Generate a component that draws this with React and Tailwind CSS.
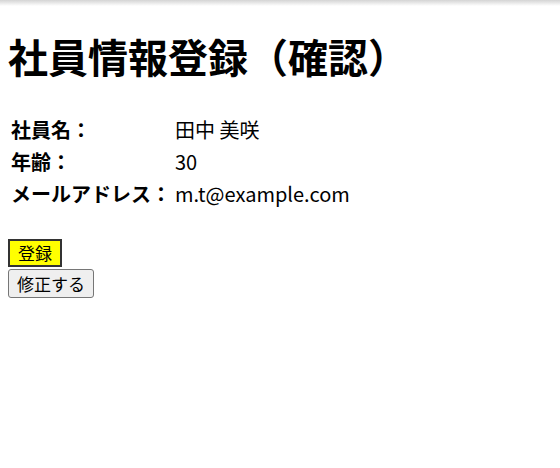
import React from 'react';

const rows = [
  { label: '社員名：', value: '田中 美咲' },
  { label: '年齢：', value: '30' },
  { label: 'メールアドレス：', value: 'm.t@example.com' },
];

const App = () => {
  return (
    <div className="relative min-h-[468px] bg-white text-black px-2 pt-[27px] font-['Noto_Sans_CJK_JP','Noto_Sans',sans-serif] text-[20px]">
      {/* top shade */}
      <div className="absolute top-0 left-0 right-0 h-[6px] bg-gradient-to-b from-[#d4d4d4] to-white" />

      <h1 className="text-[40px] font-bold leading-[58px]">社員情報登録（確認）</h1>

      <table className="mt-[28px] border-separate border-spacing-[2px] leading-[28px]">
        <tbody>
          {rows.map((r) => (
            <tr key={r.label}>
              <th className="p-px text-left font-bold">{r.label}</th>
              <td className="p-px">{r.value}</td>
            </tr>
          ))}
        </tbody>
      </table>

      <div className="mt-[28px] flex flex-col items-start">
        <button className="bg-[#ffff00] border-2 border-[#333] px-[8px] py-0 text-[17px] leading-[24px]">
          登録
        </button>
        <button className="mt-[2px] bg-[#efefef] border border-[#767676] rounded-[3px] px-[8px] py-px text-[17px] leading-[25px]">
          修正する
        </button>
      </div>
    </div>
  );
};

export default App;
